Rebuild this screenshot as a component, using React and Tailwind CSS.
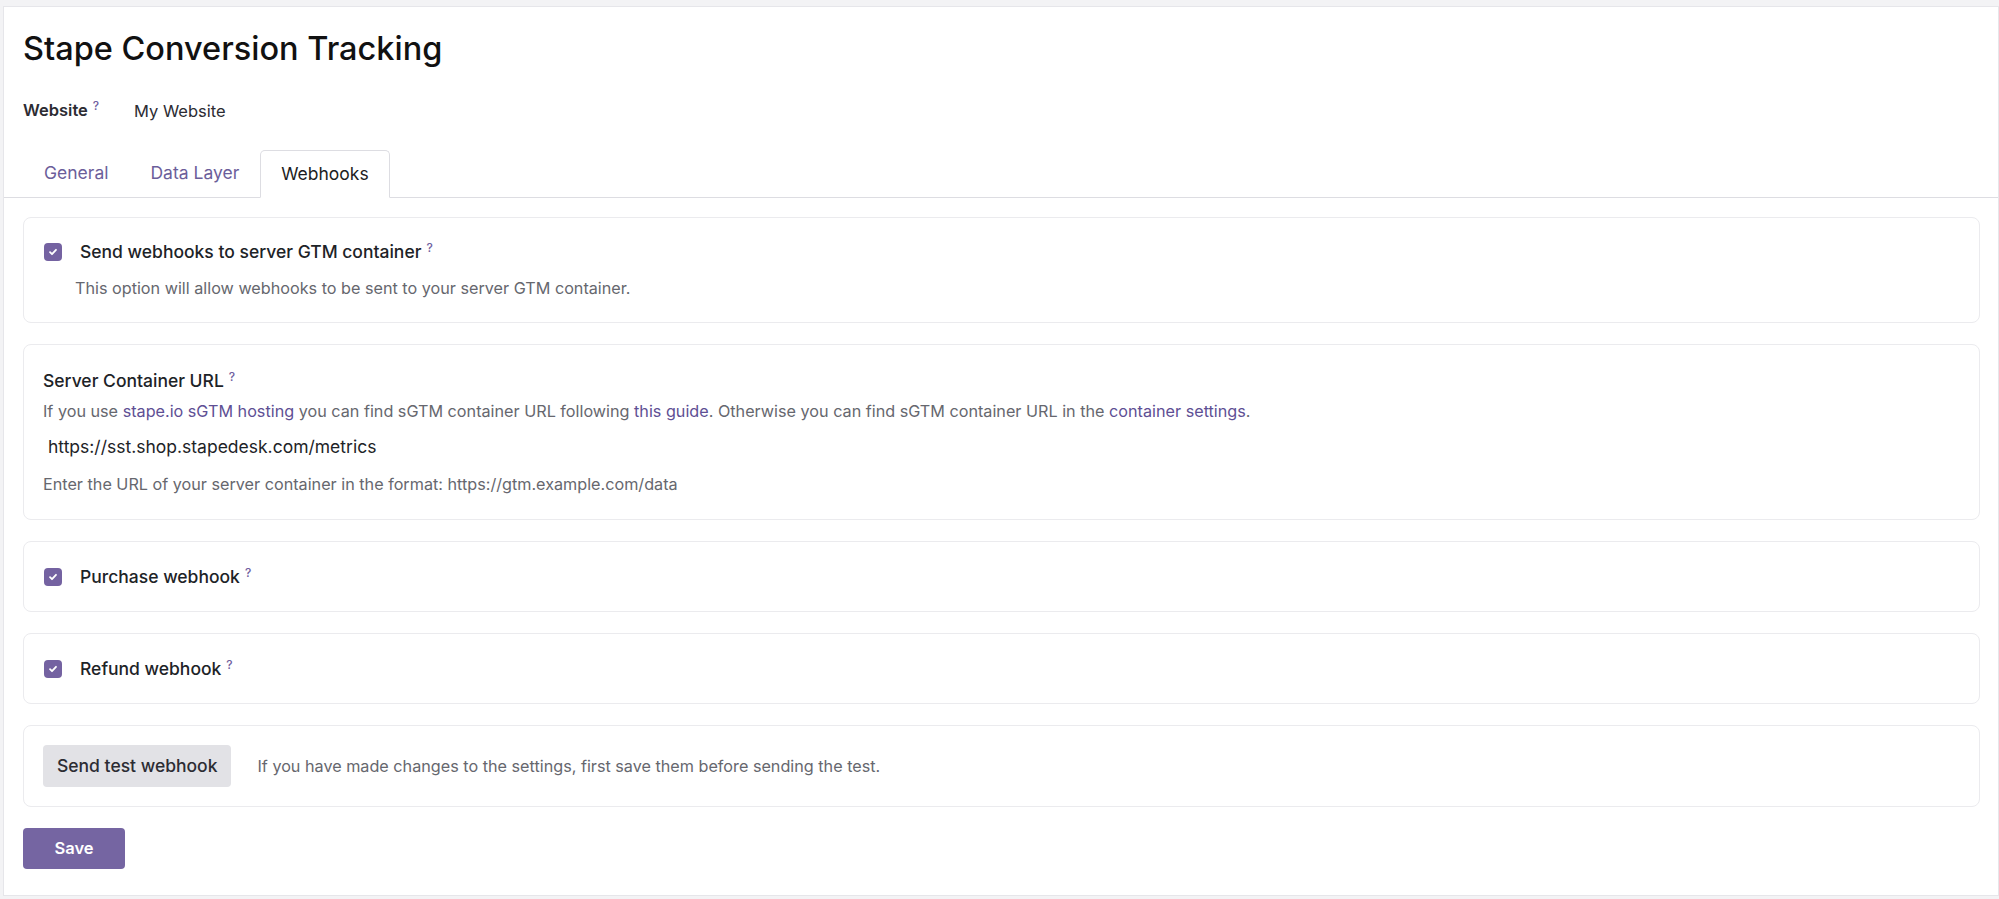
import React, { useState } from "react";

const Help = () => (
  <sup className="ml-[5px] text-[12px] font-medium text-[#6f5ea0]">?</sup>
);

const Check = ({ checked, onClick }) => (
  <span
    onClick={onClick}
    className={`flex h-[18px] w-[18px] shrink-0 cursor-pointer items-center justify-center rounded-[4px] ${
      checked ? "bg-[#7462a1]" : "border border-[#c3c4c7] bg-white"
    }`}
  >
    {checked && (
      <svg width="10" height="10" viewBox="0 0 10 10" fill="none">
        <path
          d="M2 5.2l2 2 4-4.4"
          stroke="white"
          strokeWidth="1.8"
          strokeLinecap="round"
          strokeLinejoin="round"
        />
      </svg>
    )}
  </span>
);

const Card = ({ className = "", children }) => (
  <div
    className={`rounded-[8px] border border-[#ebebee] bg-white ${className}`}
  >
    {children}
  </div>
);

const App = () => {
  const [tab, setTab] = useState("Webhooks");
  const [opts, setOpts] = useState({
    send: true,
    purchase: true,
    refund: true,
  });

  function toggle(name) {
    const newOpts = { ...opts };
    newOpts[name] = !newOpts[name];
    setOpts(newOpts);
  }

  const tabs = ["General", "Data Layer", "Webhooks"];

  return (
    <div
      className="min-h-screen bg-[#f3f3f5] pl-[3px] pt-[6px] text-[#1d2327]"
      style={{ fontFamily: "Inter, 'Noto Sans', sans-serif" }}
    >
      <div className="border border-[#e6e6ea] bg-white pb-[26px]">
        <div className="pl-[19px] pt-[23px]">
          <h1 className="text-[32.5px] font-medium leading-[38px] text-[#111]">
            Stape Conversion Tracking
          </h1>
          <div className="mt-[28px] flex items-center text-[16.5px] leading-[24px]">
            <div className="w-[111px] font-semibold text-[#2c2c33]">
              Website
              <Help />
            </div>
            <div className="mt-[3px] text-[#2c2c33]">My Website</div>
          </div>
        </div>

        <div className="mt-[27px] flex border-b border-[#dddde2] pl-[19px]">
          {tabs.map((t) =>
            t === tab ? (
              <div
                key={t}
                className="-mb-px flex h-[48px] cursor-pointer items-center rounded-t-[5px] border border-[#dddde2] border-b-white bg-white px-[20px] text-[17.5px] text-[#1d1d22]"
              >
                {t}
              </div>
            ) : (
              <div
                key={t}
                onClick={() => setTab(t)}
                className="flex h-[47px] cursor-pointer items-center px-[21px] text-[17.5px] text-[#6b5e9a]"
              >
                {t}
              </div>
            )
          )}
        </div>

        <div className="flex flex-col gap-[21px] pl-[19px] pr-[18px] pt-[19px]">
          <Card className="px-[20px] pb-[22px] pt-[21px]">
            <div className="flex items-center gap-[18px]">
              <Check checked={opts.send} onClick={() => toggle("send")} />
              <span className="text-[17.5px] font-medium leading-[26px]">
                Send webhooks to server GTM container
                <Help />
              </span>
            </div>
            <p className="ml-[31px] mt-[11px] text-[16.2px] leading-[24px] text-[#66676e]">
              This option will allow webhooks to be sent to your server GTM
              container.
            </p>
          </Card>

          <Card className="px-[19px] pb-[23px] pt-[23px]">
            <div className="text-[17.5px] font-medium leading-[26px]">
              Server Container URL
              <Help />
            </div>
            <p className="mt-[5px] text-[16.2px] leading-[24px] text-[#66676e]">
              If you use{" "}
              <a href="#" className="text-[#5e4f94]">
                stape.io sGTM hosting
              </a>{" "}
              you can find sGTM container URL following{" "}
              <a href="#" className="text-[#5e4f94]">
                this guide
              </a>
              . Otherwise you can find sGTM container URL in the{" "}
              <a href="#" className="text-[#5e4f94]">
                container settings
              </a>
              .
            </p>
            <input
              type="text"
              defaultValue="https://sst.shop.stapedesk.com/metrics"
              className="mt-[8px] block w-full border-0 bg-transparent px-[5px] py-[3px] text-[17.5px] leading-[26px] text-[#1d2327] outline-none"
            />
            <p className="mt-[9px] text-[16.2px] leading-[24px] text-[#66676e]">
              Enter the URL of your server container in the format:
              https://gtm.example.com/data
            </p>
          </Card>

          <Card className="flex h-[71px] items-center gap-[18px] px-[20px]">
            <Check checked={opts.purchase} onClick={() => toggle("purchase")} />
            <span className="text-[17.5px] font-medium leading-[26px]">
              Purchase webhook
              <Help />
            </span>
          </Card>

          <Card className="flex h-[71px] items-center gap-[18px] px-[20px]">
            <Check checked={opts.refund} onClick={() => toggle("refund")} />
            <span className="text-[17.5px] font-medium leading-[26px]">
              Refund webhook
              <Help />
            </span>
          </Card>

          <Card className="flex items-center gap-[26px] px-[19px] py-[19px]">
            <button className="h-[42px] rounded-[4px] bg-[#e2e2e6] px-[14px] text-[17.5px] font-medium text-[#2c2c33]">
              Send test webhook
            </button>
            <span className="text-[16.2px] text-[#66676e]">
              If you have made changes to the settings, first save them before
              sending the test.
            </span>
          </Card>
        </div>

        <div className="pl-[19px] pt-[21px]">
          <button className="h-[41px] w-[102px] rounded-[4px] bg-[#7565a2] text-[16.5px] font-semibold text-white">
            Save
          </button>
        </div>
      </div>
    </div>
  );
};

export default App;
